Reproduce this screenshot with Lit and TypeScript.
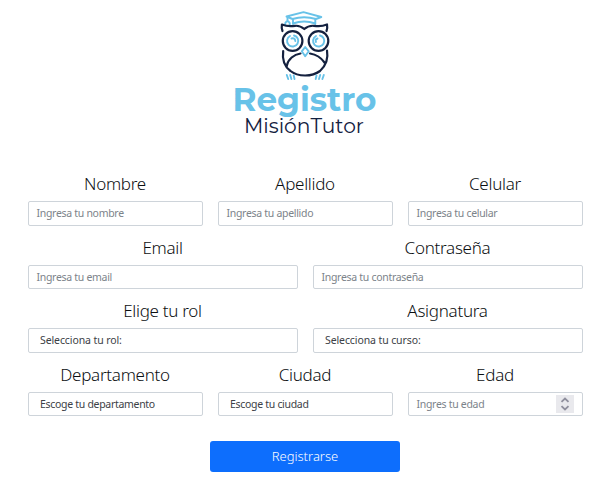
import { LitElement, html, css, svg } from "lit";
import { customElement, property } from "lit/decorators.js";

type Kind = "text" | "select" | "select wide" | "number";
interface Field { label: string; hint: string; kind: Kind; }

const rows: Field[][] = [
  [
    { label: "Nombre", hint: "Ingresa tu nombre", kind: "text" },
    { label: "Apellido", hint: "Ingresa tu apellido", kind: "text" },
    { label: "Celular", hint: "Ingresa tu celular", kind: "text" },
  ],
  [
    { label: "Email", hint: "Ingresa tu email", kind: "text" },
    { label: "Contraseña", hint: "Ingresa tu contraseña", kind: "text" },
  ],
  [
    { label: "Elige tu rol", hint: "Selecciona tu rol:", kind: "select wide" },
    { label: "Asignatura", hint: "Selecciona tu curso:", kind: "select wide" },
  ],
  [
    { label: "Departamento", hint: "Escoge tu departamento", kind: "select" },
    { label: "Ciudad", hint: "Escoge tu ciudad", kind: "select" },
    { label: "Edad", hint: "Ingres tu edad", kind: "number" },
  ],
];

@customElement("brand-logo")
export class BrandLogo extends LitElement {
  static styles = css`
    :host { display: block; width: 160px; height: 140px; }
    .art { display: block; }
    .navy { fill: none; stroke: #14213f; stroke-width: 2.2; stroke-linecap: round; stroke-linejoin: round; }
    .sky { fill: none; stroke: #68c2e8; stroke-width: 1.9; stroke-linecap: round; stroke-linejoin: round; }
    .title { font: 700 32.5px Montserrat, Inter, sans-serif; fill: #68c2e8; }
    .name { font: 400 20px Montserrat, Inter, sans-serif; fill: #14213f; }
  `;
  render() {
    return html`<svg class="art" width="160" height="140" viewBox="225 0 160 140">
      ${svg`
        <path class="sky" d="M286.500 16.500 L303.500 12.200 L321.300 17 L316 19 Q304 15.500 292.500 19 Z M293 19.500 V24 M315.300 19.500 V24 M293 23.500 Q304 19.500 315.300 23.500 M287.500 17.500 V21" />
        <path class="sky" d="M285.300 25 V23 Q287.500 19.500 289.700 23 V25" />
        <path class="navy" d="M282.500 31 Q281.300 28 281.900 24.500 Q288 27 295 25.800 Q300 25.300 304.300 29 Q308.500 25.300 314 25.800 Q321 27 327 24.500 Q327.700 28 326.500 31" />
        <circle class="navy" cx="292.600" cy="41" r="9.800" />
        <circle class="navy" cx="318.500" cy="41" r="9.800" />
        <path class="sky" d="M290 36 A5.600 5.600 0 1 0 294 35.500 M316 36 A5.600 5.600 0 1 0 320 35.500" />
        <path class="sky" d="M291.500 38.500 Q295 37.500 295.300 41 M317.500 38.500 Q314.800 39.500 316 42" />
        <path class="navy" d="M283.200 51 C281.800 61 285 67 290.500 71 C298 77 312 77 320 71 C325.500 66 328.500 59 327 50.500" />
        <path class="navy" d="M286.700 66 C288 59 294 54.500 300.500 53.500 M310 53.500 C316 54.500 321 57.500 324.500 62.500" />
        <path class="sky" d="M305.200 47 L308.700 51.300 L305.200 56.300 L301.800 51.300 Z" />
        <path class="sky" d="M286.800 75 L288.200 79 M290.200 75 L291.400 79 M293.700 75.500 L294.500 79 M316.500 75.500 L315.700 79 M320.200 75 L319 79 M323.800 75 L322.400 79" />
        <text class="title" x="232.500" y="111" textLength="144" lengthAdjust="spacingAndGlyphs">Registro</text>
        <text class="name" x="244" y="133" textLength="120" lengthAdjust="spacingAndGlyphs">MisiónTutor</text>
      `}
    </svg>`;
  }
}

@customElement("form-field")
export class FormField extends LitElement {
  @property({ attribute: false }) field!: Field;
  static styles = css`
    :host { display: flex; flex-direction: column; flex: 1 1 0; min-width: 0; }
    .label { height: 27px; line-height: 27px; font-size: 17px; font-weight: 300; letter-spacing: -0.28px; color: #0c0f12; text-align: center; margin: 0 1px 4px 0; white-space: nowrap; }
    .box { box-sizing: border-box; flex: 1; display: flex; align-items: center; justify-content: space-between; border: 1px solid #ced4da; border-radius: 2px; padding: 0 8px 1px 7.5px; font-size: 10.5px; letter-spacing: -0.3px; color: #7c838a; white-space: nowrap; }
    .select { padding-left: 11px; color: #3c4146; }
    .wide { letter-spacing: -0.1px; }
    .spin { width: 18px; height: 18px; background: #e9e9ed; }
    .arrows { fill: none; stroke: #8f8f9d; stroke-width: 1.8; }
  `;
  render() {
    const { label, hint, kind } = this.field;
    return html`<div class="label">${label}</div>
      <div class="box ${kind}"><span>${hint}</span>
      ${kind === "number" ? html`<svg class="spin" viewBox="0 0 18 18"><path class="arrows" d="M5.500 6.800 L9 3.500 L12.500 6.800 M5.500 11.200 L9 14.500 L12.500 11.200" /></svg>` : null}</div>`;
  }
}

@customElement("app-root")
export class AppRoot extends LitElement {
  static styles = css`
    :host { display: flex; flex-direction: column; align-items: center; box-sizing: border-box; height: 493px; background: #fff; font-family: "Noto Sans", sans-serif; }
    .logo { margin-left: 7px; }
    .form { display: grid; grid-template-rows: 56px 55px 56px 55px; row-gap: 8px; width: 555px; margin: 30px 0 0 8px; }
    .row { display: flex; gap: 15px; }
    .submit { width: 190px; height: 31px; margin: 25px 0 0 7px; padding: 0 0 2px; border: 0; border-radius: 3px; background: #0d6efd; color: #fff; font: 300 13px "Noto Sans", sans-serif; }
  `;
  render() {
    return html`<brand-logo class="logo"></brand-logo>
      <div class="form">${rows.map((r) => html`<div class="row">${r.map((f) => html`<form-field .field=${f}></form-field>`)}</div>`)}</div>
      <button class="submit">Registrarse</button>`;
  }
}
